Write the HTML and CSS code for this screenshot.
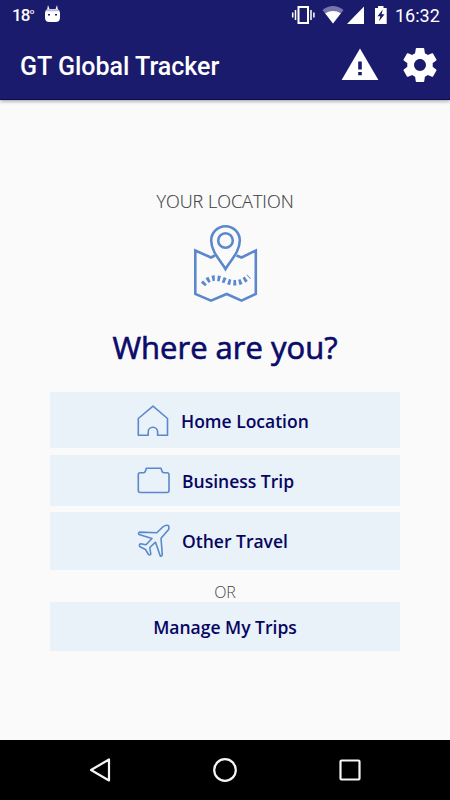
FILE: index.html
```html
<!DOCTYPE html>
<html lang="en">
<head>
<meta charset="utf-8">
<title>GT Global Tracker</title>
<link rel="stylesheet" href="styles.css">
</head>
<body>
<header class="top">
  <div class="status">
    <span class="temp">18<sup>o</sup></span>
    <svg class="cat" viewBox="45 5 15 18" width="15" height="18"><path fill="#fff" d="M48 5l1.400 4h6.200L57 5l.8 4.200q2.200 1 2.200 3.800v4.500q0 4.500-4.500 4.500h-6q-4.500 0-4.500-4.500V13q0-2.800 2.200-3.800z"/><path fill="#b9b9df" d="M47 9.300h11l1 2H46z"/><path fill="#1b1b6d" d="M48 14h2v1.600h-2zM55 14h2v1.600h-2z"/></svg>
    <svg class="signals" viewBox="291 5 97 20" width="97" height="20">
      <g fill="none" stroke="#fff"><rect x="298.500" y="7" width="9.500" height="16" stroke-width="2"/><path stroke-width="1.500" d="M295.500 10v10M292.700 12.500v5M311 10v10M313.900 12.500v5"/></g>
      <path fill="#7676ac" d="M322.500 10q10.500-8 21 0L333 23.500z"/><path fill="#fff" d="M325.200 13.300q7.800-4.500 15.600 0L333 23.500z"/>
      <path fill="#fff" d="M364 6.500V24h-17z"/>
      <path fill="#fff" d="M375 8h3V6h5.500v2h3.200v16H375z"/><path fill="#1b1b6d" d="M382.800 9.500l-5.300 6.800h2.800l-1.300 5 5.600-7h-3z"/>
    </svg>
    <span class="clock">16:32</span>
  </div>
  <div class="appbar">
    <h1>GT Global Tracker</h1>
    <svg class="warn" viewBox="341 48 38 33" width="38" height="33"><path fill="#fff" d="M360 48.500L378.400 80H341.600z"/><path fill="#1b1b6d" d="M358.200 61.500h3.600v8h-3.600zM358.200 72h3.600v3.200h-3.600z"/></svg>
    <svg viewBox="2.200 2 19.600 20" width="34" height="34"><path fill="#fff" d="M19.430 12.980c.04-.32.07-.64.07-.98s-.03-.66-.07-.98l2.110-1.650c.19-.15.24-.42.12-.64l-2-3.460c-.12-.22-.39-.3-.61-.22l-2.490 1c-.52-.4-1.080-.73-1.690-.98l-.38-2.650C14.460 2.180 14.250 2 14 2h-4c-.25 0-.46.180-.49.420l-.38 2.650c-.61.250-1.170.590-1.690.980l-2.490-1c-.23-.09-.49 0-.61.220l-2 3.460c-.13.220-.07.490.12.640l2.110 1.650c-.04.320-.07.650-.07.980s.03.660.07.980l-2.110 1.650c-.19.150-.24.420-.12.640l2 3.460c.12.220.39.300.61.220l2.490-1c.52.400 1.080.730 1.690.980l.38 2.650c.03.240.24.420.49.420h4c.25 0 .46-.18.49-.42l.38-2.650c.61-.25 1.170-.59 1.690-.98l2.490 1c.23.090.49 0 .61-.22l2-3.460c.12-.22.07-.49-.12-.64zM12 15.500c-1.930 0-3.500-1.570-3.500-3.500s1.570-3.500 3.500-3.500 3.500 1.570 3.500 3.500-1.570 3.500-3.500 3.500z"/></svg>
  </div>
</header>
<main>
  <p class="label">YOUR LOCATION</p>
  <svg class="map" viewBox="193 224 65 79" width="65" height="79">
    <g fill="none" stroke="#5b88cc" stroke-width="2.600"><path d="M215 255.500L211 257.500 195.300 250.500V294L211 300.600 226.700 294 241.500 300.600 255.800 294V250.500L241.500 257.500 236.500 255.500"/>
    <path fill="#fafafa" d="M225.500 269C221 261 211.200 252 211.200 240.500a14.300 14.300 0 0 1 28.600 0C239.800 252 230 261 225.500 269z"/><circle cx="225.500" cy="240.500" r="7.300"/>
    <path stroke-width="5.500" stroke-dasharray="2.800 2.700" d="M203 284.500C210 276.500 217 277 225 280.500S241 284 249 276.500"/></g>
  </svg>
  <h2>Where are you?</h2>
  <button class="choice home"><svg viewBox="136 404 34 34" width="34" height="34"><path d="M153 406.200L167.500 418.500V435.300H157.600V432a4.700 4.700 0 0 0-9.400 0V435.300H138.300V418.500z"/></svg><span>Home Location</span></button>
  <button class="choice business"><svg viewBox="136 464 34 34" width="34" height="34"><path d="M140 472.700H143.500Q145 472.700 145.500 471L146.300 468.300H161L161.900 471Q162.400 472.700 164 472.700H167Q169 472.700 169 474.700V490.500Q169 492.500 167 492.500H140.300Q138.300 492.500 138.300 490.500V474.700Q138.300 472.700 140 472.700z"/></svg><span>Business Trip</span></button>
  <button class="choice travel"><svg viewBox="136 524 34 34" width="34" height="34"><path d="M156.800 532.800L163 526.800Q165.800 524.800 168.300 525.500 169.500 527.500 168.400 529.800L161 538.200 162.300 554.500Q162 556.700 160.300 556L155.500 542.200 149.800 547.500 150.800 554Q150 555.700 148.500 554.500L145.500 549.500 140 546.800Q138.500 545 140.500 543.700L146 544.700 152 538.500 139 534.500Q137.800 533 139.500 532.100z"/></svg><span>Other Travel</span></button>
  <p class="or">OR</p>
  <button class="choice manage"><span>Manage My Trips</span></button>
</main>
<nav>
  <svg viewBox="89 757 22 26" width="22" height="26"><path d="M109 759.500V780.500L91 770z"/></svg>
  <svg viewBox="212 757 26 26" width="26" height="26"><circle cx="225" cy="770" r="10.800"/></svg>
  <svg viewBox="339 757 22 26" width="22" height="26"><rect x="340.500" y="760.500" width="19" height="19" rx="1"/></svg>
</nav>
</body>
</html>
```
FILE: styles.css
```css
* { box-sizing: border-box; margin: 0; padding: 0; }
body { width: 450px; height: 800px; display: flex; flex-direction: column; background: #fafafa; font-family: "Open Sans", sans-serif; overflow: hidden; }
svg { display: block; flex: none; }
.top { height: 100px; background: #1b1b6d; color: #fff; font-family: Roboto, sans-serif; border-bottom: 1px solid #0b0b50; box-shadow: 0 1px 4px rgba(0,0,0,.4); }
.status { height: 30px; display: flex; align-items: center; padding: 0 10px 0 12px; }
.temp { width: 33px; font-size: 17px; font-weight: 500; line-height: 30px; letter-spacing: -.8px; }
.temp sup { font-size: 8px; line-height: 0; vertical-align: 7px; }
.cat { margin-top: -2px; }
.signals { margin-left: auto; }
.clock { width: 45px; margin-left: 7px; font-size: 18px; line-height: 30px; padding-top: 1px; white-space: nowrap; }
.appbar { height: 69px; display: flex; align-items: center; padding: 0 13px 0 20px; }
h1 { flex: 1; font-size: 25px; font-weight: 500; line-height: 30px; margin-top: 5px; white-space: nowrap; }
.warn { margin-right: 24px; }
main { height: 640px; padding: 90px 50px 0; display: flex; flex-direction: column; align-items: center; }
.label { height: 34px; line-height: 22px; font-size: 18px; font-weight: 300; color: #444; -webkit-text-stroke: .15px #444; white-space: nowrap; }
h2 { height: 89px; padding-top: 22px; line-height: 44px; font-size: 31px; font-weight: 500; color: #0b0b6a; -webkit-text-stroke: .65px #0b0b6a; white-space: nowrap; }
.choice { width: 350px; border: 0; background: #e9f1f9; display: flex; align-items: center; padding-left: 86px; gap: 12px; color: #060660; font: 600 17.500px "Open Sans", sans-serif; white-space: nowrap; }
.choice path { fill: none; stroke: #5b88cc; stroke-width: 1.600; stroke-linejoin: round; }
.home { height: 56px; padding-top: 2px; gap: 11px; }
.business { height: 51px; margin-top: 7px; }
.travel { height: 58px; margin-top: 6px; }
.or { height: 32px; padding-top: 12px; line-height: 21px; font-size: 16px; font-weight: 300; color: #444; }
.manage { height: 49px; justify-content: center; padding: 0; }
nav { height: 60px; background: #000; display: flex; justify-content: space-between; align-items: center; padding: 0 89px; }
nav svg { fill: none; stroke: #f5f5f5; stroke-width: 2.200; stroke-linejoin: round; }
```
